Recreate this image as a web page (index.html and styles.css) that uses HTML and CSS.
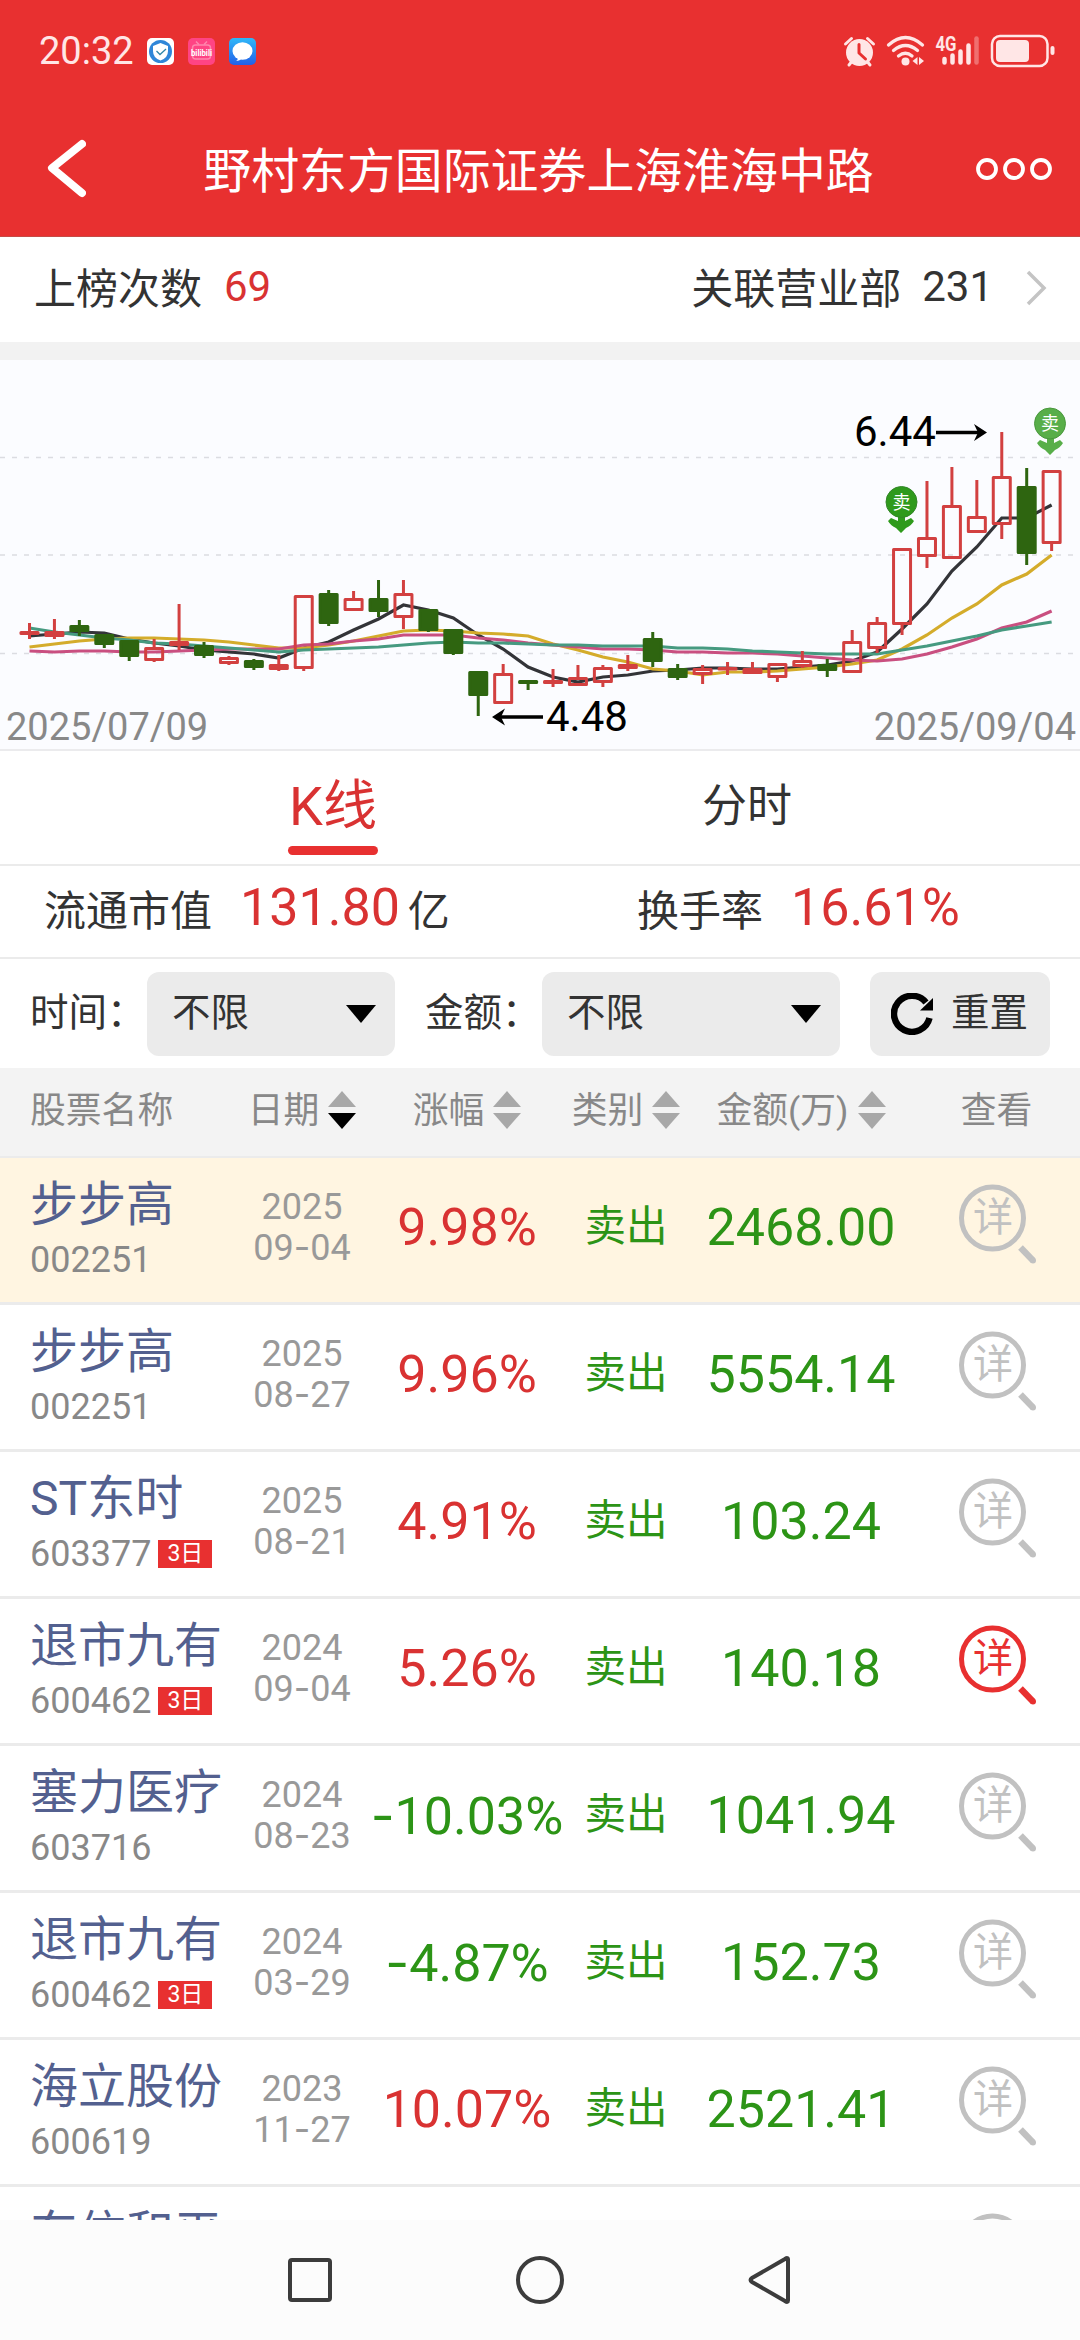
FILE: index.html
```html
<!DOCTYPE html>
<html lang="zh-CN">
<head>
    <meta charset="UTF-8">
    <title>野村东方国际证券上海淮海中路</title>
    <link rel="stylesheet" href="styles.css">
</head>
<body>
    <!-- shared icons -->
    <svg class="defs">
        <symbol id="detail" viewBox="0 0 78 80">
            <circle cx="33.5" cy="34" r="31" fill="none" stroke="currentColor" stroke-width="5"/>
            <path d="M61.5 63.5L74 76.5" stroke="currentColor" stroke-width="6.5"/>
            <circle cx="74" cy="76.5" r="3" fill="currentColor"/>
        </symbol>
        <symbol id="sort" viewBox="0 0 28 38">
            <path d="M0 16L14 0L28 16z" fill="#a8a8a8"/>
            <path d="M0 22L14 38L28 22z" fill="currentColor"/>
        </symbol>
    </svg>

    <header>
        <div class="status">
            <span class="time">20:32</span>
            <svg class="app" viewBox="0 0 27 27">
                <rect width="27" height="27" rx="5" fill="#fff"/>
                <circle cx="13.5" cy="13.5" r="11.5" fill="#2f86d8"/>
                <path d="M13.5 5L21 8V13Q21 20 13.5 22.500Q6 20 6 13V8z" fill="#fff"/>
                <path d="M9.500 13l3.500 3.500l6-5.500" fill="none" stroke="#2f86a8" stroke-width="1.300"/>
            </svg>
            <svg class="app" viewBox="0 0 27 27">
                <rect width="27" height="27" rx="5" fill="#ff4484"/>
                <rect x="4.500" y="7" width="18" height="14" rx="3" fill="none" stroke="#ff86ad" stroke-width="1.500"/>
                <path d="M8 3.500l3 3M19 3.500l-3 3" stroke="#ff86ad" stroke-width="1.500"/>
                <text x="3" y="18" textLength="21" lengthAdjust="spacingAndGlyphs" class="bili">bilibili</text>
            </svg>
            <svg class="app" viewBox="0 0 27 27">
                <defs><linearGradient id="msg" x2="0" y2="1"><stop stop-color="#2fb8f8"/><stop offset="1" stop-color="#245fe8"/></linearGradient></defs>
                <rect width="27" height="27" rx="5" fill="url(#msg)"/>
                <ellipse cx="13.5" cy="13" rx="10" ry="8.800" fill="#fff"/>
                <path d="M9 19Q9 22 7 23Q11 23 13 20z" fill="#fff"/>
            </svg>
            <span class="grow"></span>
            <svg class="sys" width="214" height="50" viewBox="842 26 214 50">
                <circle cx="859.5" cy="52.5" r="13.5" fill="#ffe6e6"/>
                <path d="M845.500 44l6-5.500M867.500 38.500l6 5.500M849 65l4-5M870 65l-4-5" stroke="#ffe6e6" stroke-width="3" stroke-linecap="round"/>
                <path d="M859 44.500v8.500l6.500 6" fill="none" stroke="#e83030" stroke-width="3" stroke-linecap="round" stroke-linejoin="round"/>
                <g fill="none" stroke="#ffe6e6" stroke-width="3.300" stroke-linecap="round">
                    <path d="M888.500 45Q905.500 30 922.500 45"/>
                    <path d="M893.500 50.500Q905.500 40.500 917.500 50.500"/>
                    <path d="M898.500 56Q905.500 50.500 912 56"/>
                </g>
                <circle cx="905.5" cy="61.500" r="4" fill="#ffe6e6"/>
                <path d="M917.500 57v8l-5-4zM919 57v8l5-4z" fill="#ffe6e6"/>
                <g stroke="#ffe6e6" stroke-width="4.500" stroke-linecap="round">
                    <path d="M944.500 59v3.500M952.500 55.500v7M960.500 51.500v11M968.500 45.500v17"/>
                    <path d="M976.500 38.500v24" opacity=".35"/>
                </g>
                <text x="935.5" y="51" class="net" textLength="21" lengthAdjust="spacingAndGlyphs">4G</text>
                <rect x="992" y="36" width="55.500" height="30" rx="8" fill="none" stroke="#ffe6e6" stroke-width="2.500"/>
                <rect x="996" y="40" width="33" height="22" rx="4" fill="#ffe6e6"/>
                <rect x="1050.500" y="46" width="4" height="9" rx="2" fill="#ffe6e6"/>
            </svg>
        </div>
        <div class="title-bar">
            <svg width="40" height="60" viewBox="0 0 40 60"><path d="M36 5L6 29L36 54" fill="none" stroke="#fff" stroke-width="8" stroke-linecap="round" stroke-linejoin="round"/></svg>
            <h1>野村东方国际证券上海淮海中路</h1>
            <svg width="76" height="24" viewBox="0 0 76 24"><g fill="none" stroke="#fff" stroke-width="3.800"><circle cx="11" cy="12" r="9"/><circle cx="38" cy="12" r="9"/><circle cx="65" cy="12" r="9"/></g></svg>
        </div>
    </header>

    <section class="summary">
        <span>上榜次数</span><span class="count red">69</span>
        <span class="grow"></span>
        <span>关联营业部</span><span class="related">231</span>
        <svg width="22" height="36" viewBox="0 0 22 36"><path d="M2 2L18 18L2 34" fill="none" stroke="#c4c4c4" stroke-width="3.500"/></svg>
    </section>

    <svg class="chart" viewBox="0 360 1080 389">
        <path d="M0 457.500H1076M0 555H1076M0 653.500H1076" stroke="#dbdce1" stroke-width="1.500" stroke-dasharray="5 7"/>
        <g id="lines" fill="none" stroke-width="3.200"></g>
        <g id="candles"></g>
        <g class="price">
            <text x="854" y="446">6.44</text>
            <text x="546" y="731">4.48</text>
        </g>
        <path d="M936 432.500H980M499 717H543" stroke="#000" stroke-width="3.500"/>
        <path d="M974 424l13 8.500l-13 8.500l4-8.500zM505 708.500l-13 8.500l13 8.500l-4-8.500z"/>
        <g class="sell">
            <path d="M898 514h7v7l6-3l3 3q-3 5-8 7l-5 5l-5-5q-5-2-8-7l3-3l7 3z" fill="#2f9a1c"/>
            <circle cx="901.500" cy="502" r="15.500" fill="#2f9a1c" stroke="#34862a"/>
            <text x="901.500" y="508.500">卖</text>
        </g>
        <g class="sell">
            <path d="M1047 436h7v7l6-3l3 3q-3 5-8 7l-5 5l-5-5q-5-2-8-7l3-3l7 3z" fill="#58ae49"/>
            <circle cx="1050" cy="423.500" r="15.500" fill="#58ae49" stroke="#4a983e"/>
            <text x="1050" y="430">卖</text>
        </g>
        <g class="dates">
            <text x="6" y="740">2025/07/09</text>
            <text x="1076" y="740" text-anchor="end">2025/09/04</text>
        </g>
    </svg>

    <nav class="tabs">
        <div class="tab active">K线</div>
        <div class="tab">分时</div>
    </nav>

    <section class="stats">
        <div class="stat cap">流通市值<b>131.80</b>亿</div>
        <div class="stat">换手率<b>16.61%</b></div>
    </section>

    <section class="filters">
        <span class="label">时间：</span>
        <div class="select"><span>不限</span><i></i></div>
        <span class="label">金额：</span>
        <div class="select wide"><span>不限</span><i></i></div>
        <div class="reset">
            <svg width="42" height="42" viewBox="0 0 42 42"><path d="M38.500 25A18 18 0 1 1 35 9.500" fill="none" stroke="#000" stroke-width="6.500"/><path d="M42 5V17.500H29z"/></svg>
            <span>重置</span>
        </div>
    </section>

    <div class="grid thead">
        <div class="left"><span>股票名称</span></div>
        <div><span>日期</span><svg class="sort down"><use href="#sort"/></svg></div>
        <div><span>涨幅</span><svg class="sort"><use href="#sort"/></svg></div>
        <div><span>类别</span><svg class="sort"><use href="#sort"/></svg></div>
        <div><span>金额(万)</span><svg class="sort"><use href="#sort"/></svg></div>
        <div><span>查看</span></div>
    </div>

    <main id="list"></main>

    <footer>
        <svg width="50" height="50" viewBox="0 0 50 50"><rect x="5" y="5" width="40" height="40" rx="2"/></svg>
        <svg width="50" height="50" viewBox="0 0 50 50"><circle cx="25" cy="25" r="22"/></svg>
        <svg width="50" height="50" viewBox="0 0 50 50"><path d="M43 4.500V45.500Q43 48 40 46L7 27Q4 25 7 23L40 4Q43 2 43 4.500z"/></svg>
    </footer>

    <script src="script.js"></script>
</body>
</html>
```
FILE: styles.css
```css
* {
    box-sizing: border-box;
}

body {
    margin: 0;
    width: 1080px;
    height: 2340px;
    display: flex;
    flex-direction: column;
    overflow: hidden;
    background-color: #fff;
    color: #333;
    font-family: Roboto, "Noto Sans CJK SC", sans-serif;
    font-size: 42px;
}

svg {
    display: block;
    flex: none;
}

header, section, nav, footer, .chart, .thead {
    flex: none;
}

.defs {
    width: 0;
    height: 0;
}

.grow {
    flex: 1;
}

.red {
    color: #d93232;
}

.green {
    color: #2c9416;
}

header {
    height: 237px;
    background-color: #e83030;
    border-bottom: 1px solid #c64a45;
    color: #fff;
}

.status {
    display: flex;
    align-items: center;
    gap: 14px;
    height: 102px;
    padding: 0 24px 0 39px;
}

.time {
    width: 94px;
    color: #ffe6e6;
    font-size: 38px;
}

.app {
    width: 27px;
    height: 27px;
    overflow: visible;
}

.bili {
    font-size: 9px;
    font-weight: bold;
    fill: #fff;
}

.net {
    font-size: 20px;
    font-weight: bold;
    fill: #ffe6e6;
}

.title-bar {
    display: flex;
    align-items: center;
    justify-content: space-between;
    height: 134px;
    padding: 0 28px 0 46px;
}

h1 {
    margin: 0;
    padding: 0 0 4px 15px;
    font-size: 47.9px;
    font-weight: normal;
}

.summary {
    display: flex;
    align-items: center;
    height: 123px;
    padding: 0 32px 3px 34px;
    border-bottom: 18px solid #f2f2f2;
}

.summary span {
    padding-bottom: 6px;
}

.summary .count {
    padding-bottom: 4px;
    margin-left: 22px;
}

.summary .related {
    padding-bottom: 4px;
    margin: 0 33px 0 21px;
}

.chart {
    width: 1080px;
    height: 391px;
    background-color: #fbfcff;
    border-bottom: 2px solid #ebebed;
}

.price {
    font-size: 42px;
    fill: #000;
}

.dates {
    font-size: 38px;
    fill: #888;
}

.sell {
    font-size: 18px;
    fill: #fff;
    text-anchor: middle;
}

.tabs {
    display: flex;
    justify-content: center;
    gap: 324px;
    height: 115px;
    border-bottom: 2px solid #ebebeb;
}

.tab {
    width: 90px;
    height: 104px;
    line-height: 111px;
    text-align: center;
    font-size: 45px;
    white-space: nowrap;
}

.tab.active {
    line-height: 111px;
    font-size: 54px;
    color: #d93232;
}

.tab.active::after {
    content: "";
    display: block;
    height: 9px;
    margin-top: -16px;
    border-radius: 5px;
    background-color: #e83030;
}

.stats {
    display: flex;
    height: 93px;
    padding: 0 0 8px 44px;
    border-bottom: 2px solid #ebebeb;
}

.stat {
    display: flex;
    align-items: center;
}

.stat.cap {
    width: 593px;
}

.stat b {
    margin: 0 8px 0 28px;
    font-size: 52px;
    font-weight: normal;
    color: #d93232;
}

.filters {
    display: flex;
    align-items: center;
    height: 109px;
    padding: 0 30px;
    font-size: 38.5px;
}

.filters span {
    padding-bottom: 9px;
}

.label {
    width: 117px;
    white-space: nowrap;
}

.select, .reset {
    display: flex;
    align-items: center;
    justify-content: space-between;
    height: 84px;
    border-radius: 12px;
    background-color: #ebebeb;
}

.select {
    width: 248px;
    margin-right: 30px;
    padding: 0 19px 0 25px;
}

.select.wide {
    width: 298px;
}

.select i {
    border: 15.5px solid transparent;
    border-top: 18px solid #000;
    border-bottom: 0;
}

.reset {
    width: 180px;
    padding: 0 22px 0 21px;
}

.grid {
    display: grid;
    grid-template-columns: 203px 138px 192px 126px 224px 167px;
    padding-left: 30px;
}

.grid > div {
    display: flex;
    align-items: center;
    justify-content: center;
    white-space: nowrap;
}

.grid > .left {
    justify-content: flex-start;
}

.thead {
    height: 90px;
    padding-bottom: 4px;
    background-color: #f3f3f3;
    border-bottom: 2px solid #ebebeb;
    color: #888;
    font-size: 35.8px;
}

.thead span {
    padding-bottom: 7px;
}

.sort {
    width: 28px;
    height: 38px;
    margin-left: 9px;
    color: #a8a8a8;
}

.sort.down {
    color: #000;
}

main {
    flex: 1;
    overflow: hidden;
}

.row {
    height: 147px;
    border-bottom: 3px solid #ebebeb;
}

.row.active {
    background-color: #fff5e1;
}

.grid > .stock {
    flex-direction: column;
    align-items: flex-start;
    justify-content: flex-start;
}

.name {
    margin-top: 14px;
    line-height: 66px;
    font-size: 48px;
    color: #53608f;
}

.code {
    display: flex;
    align-items: center;
    gap: 7px;
    line-height: 44px;
    font-size: 36px;
    color: #888;
}

.badge {
    width: 54px;
    height: 28px;
    line-height: 27px;
    background-color: #e83030;
    color: #fff;
    font-size: 23px;
    text-align: center;
}

.grid > .date {
    line-height: 40px;
    padding-bottom: 5px;
    font-size: 36px;
    color: #999;
    text-align: center;
}

.dash {
    font-family: Inter, sans-serif;
}

.grid > .num {
    padding-bottom: 6px;
    font-size: 52px;
}

.grid > .type {
    padding-bottom: 14px;
    font-size: 41.5px;
}

.grid > .view {
    position: relative;
    align-items: flex-start;
    justify-content: flex-start;
    padding: 26px 0 0 46px;
    color: #c1c1c1;
}

.view.on {
    color: #e83030;
}

.view svg {
    width: 78px;
    height: 80px;
}

/* character inside the magnifier lens */
.view span {
    position: absolute;
    left: 60px;
    top: 40px;
    line-height: 40px;
    font-size: 40px;
}

footer {
    display: flex;
    align-items: center;
    justify-content: center;
    gap: 180px;
    height: 120px;
    background-color: #fcfcfc;
}

footer svg {
    fill: none;
    stroke: #3c3c3c;
    stroke-width: 4;
}
```
FILE: script.js
```javascript
const rows = [
    ['步步高', '002251', '', '2025', '09-04', '9.98%', '2468.00'],
    ['步步高', '002251', '', '2025', '08-27', '9.96%', '5554.14'],
    ['ST东时', '603377', '3日', '2025', '08-21', '4.91%', '103.24'],
    ['退市九有', '600462', '3日', '2024', '09-04', '5.26%', '140.18'],
    ['塞力医疗', '603716', '', '2024', '08-23', '-10.03%', '1041.94'],
    ['退市九有', '600462', '3日', '2024', '03-29', '-4.87%', '152.73'],
    ['海立股份', '600619', '', '2023', '11-27', '10.07%', '2521.41'],
    ['东信和平', '', '', '', '', '', '']
];

const dash = text => text.replace('-', '<span class="dash">-</span>');

document.getElementById('list').innerHTML = rows.map((r, i) => `
    <div class="grid row ${i === 0 ? 'active' : ''}">
        <div class="stock">
            <div class="name">${r[0]}</div>
            <div class="code">${r[1]}${r[2] ? `<span class="badge">${r[2]}</span>` : ''}</div>
        </div>
        <div class="date"><div>${r[3]}<br>${dash(r[4])}</div></div>
        <div class="num ${r[5][0] === '-' ? 'green' : 'red'}"><div>${dash(r[5])}</div></div>
        <div class="type green">${r[6] ? '卖出' : ''}</div>
        <div class="num green">${r[6]}</div>
        <div class="view ${i === 3 ? 'on' : ''}"><svg><use href="#detail"/></svg><span>详</span></div>
    </div>`).join('');

// up (1) or down (0), high, body top, body bottom, low
const candles = [
    [1, 623, 631, 635, 639], [1, 619, 631, 637, 639], [0, 620, 625, 632, 636], [0, 634, 634, 645, 648],
    [0, 640, 640, 657, 661], [1, 639, 647, 661, 662], [1, 604, 641, 646, 650], [0, 642, 645, 656, 658],
    [1, 656, 657, 664, 665], [0, 659, 660, 668, 670], [1, 655, 664, 670, 671], [1, 595, 595, 669, 671],
    [0, 590, 593, 624, 626], [1, 591, 598, 611, 611], [0, 580, 598, 612, 617], [1, 580, 593, 618, 629],
    [0, 609, 609, 631, 632], [0, 629, 629, 654, 655], [0, 671, 671, 696, 716], [1, 664, 673, 704, 704],
    [0, 680, 680, 684, 690], [1, 669, 680, 684, 687], [1, 665, 677, 686, 686], [1, 665, 667, 683, 687],
    [1, 655, 664, 669, 671], [0, 632, 638, 662, 667], [0, 664, 668, 678, 680], [1, 665, 668, 675, 684],
    [1, 662, 667, 670, 675], [1, 662, 668, 674, 674], [1, 663, 663, 678, 682], [1, 651, 660, 667, 668],
    [0, 659, 664, 671, 677], [1, 630, 641, 673, 673], [1, 617, 622, 649, 653], [1, 548, 548, 625, 635],
    [1, 481, 537, 557, 568], [1, 467, 505, 559, 559], [1, 480, 516, 533, 533], [1, 432, 476, 525, 539],
    [0, 468, 486, 554, 565], [1, 470, 470, 544, 551]
];

// moving averages, one value per day
const averages = {
    '#333438': [636, 634, 632, 633, 639, 643, 646, 650, 652, 654, 658, 648, 642, 630, 619, 605, 610, 618, 635, 649, 667, 677, 682, 677, 675, 671, 670, 668, 668, 669, 669, 667, 665, 661, 652, 629, 604, 571, 547, 518, 518, 505],
    '#d4ac2b': [647, 644, 641, 639, 638, 638, 639, 640, 642, 645, 648, 648, 645, 641, 636, 631, 630, 631, 633, 634, 636, 644, 650, 657, 662, 669, 671, 675, 672, 672, 671, 669, 667, 664, 660, 649, 635, 618, 604, 585, 574, 555],
    '#c94f80': [651, 652, 651, 651, 652, 652, 651, 650, 649, 649, 649, 645, 644, 641, 639, 635, 635, 635, 638, 640, 643, 645, 647, 649, 649, 650, 652, 652, 653, 653, 654, 656, 658, 660, 661, 659, 654, 647, 639, 628, 622, 611],
    '#469a80': [628, 632, 635, 638, 640, 643, 644, 646, 648, 650, 652, 650, 649, 648, 647, 645, 643, 642, 643, 643, 644, 645, 645, 646, 646, 646, 648, 648, 649, 651, 652, 653, 654, 654, 654, 650, 646, 641, 636, 630, 626, 622]
};

const xAt = i => 29.5 + i * 24.93;

document.getElementById('lines').innerHTML = Object.entries(averages).map(([color, values]) =>
    `<polyline stroke="${color}" points="${values.map((y, i) => xAt(i) + ',' + y).join(' ')}"/>`).join('');

document.getElementById('candles').innerHTML = candles.map(([up, high, top, bottom, low], i) => {
    const x = xAt(i);
    const color = up ? '#d24040' : '#2e6510';
    const fill = up ? 'none' : color;
    return `<g stroke="${color}" stroke-width="3">
        <path d="M${x} ${high}V${top + 1}M${x} ${bottom - 1}V${low}"/>
        <rect x="${x - 8.5}" y="${top + 1.5}" width="17" height="${Math.max(bottom - top - 3, 0.5)}" fill="${fill}" stroke-linejoin="round"/>
    </g>`;
}).join('');
```
